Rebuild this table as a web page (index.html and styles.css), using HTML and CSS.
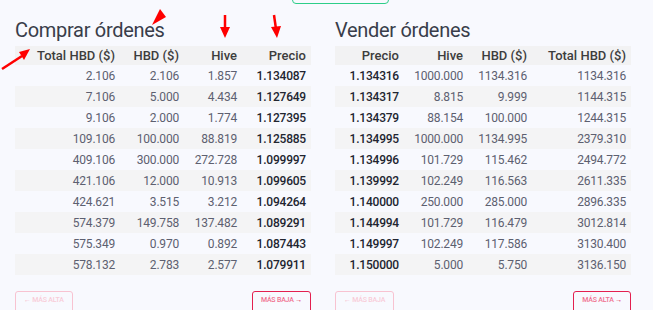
FILE: index.html
```html
<!DOCTYPE html>
<html lang="es">
<head>
<meta charset="utf-8">
<title>Órdenes</title>
<link rel="stylesheet" href="styles.css">
</head>
<body>
<div class="topbar"><div class="topbtn"></div></div>
<div class="panes">
  <section class="pane">
    <h2 class="title">Comprar órdenes</h2>
    <table class="book">
      <colgroup><col class="w105"><col class="w64"><col class="w58"><col class="w69"></colgroup>
      <thead><tr><th>Total HBD ($)</th><th>HBD ($)</th><th>Hive</th><th>Precio</th></tr></thead>
      <tbody>
        <tr><td>2.106</td><td>2.106</td><td>1.857</td><td class="price">1.134087</td></tr>
        <tr><td>7.106</td><td>5.000</td><td>4.434</td><td class="price">1.127649</td></tr>
        <tr><td>9.106</td><td>2.000</td><td>1.774</td><td class="price">1.127395</td></tr>
        <tr><td>109.106</td><td>100.000</td><td>88.819</td><td class="price">1.125885</td></tr>
        <tr><td>409.106</td><td>300.000</td><td>272.728</td><td class="price">1.099997</td></tr>
        <tr><td>421.106</td><td>12.000</td><td>10.913</td><td class="price">1.099605</td></tr>
        <tr><td>424.621</td><td>3.515</td><td>3.212</td><td class="price">1.094264</td></tr>
        <tr><td>574.379</td><td>149.758</td><td>137.482</td><td class="price">1.089291</td></tr>
        <tr><td>575.349</td><td>0.970</td><td>0.892</td><td class="price">1.087443</td></tr>
        <tr><td>578.132</td><td>2.783</td><td>2.577</td><td class="price">1.079911</td></tr>
      </tbody>
    </table>
    <div class="pager">
      <button class="pbtn disabled"><span class="arr">&larr;</span> MÁS ALTA</button>
      <button class="pbtn">MÁS BAJA <span class="arr">&rarr;</span></button>
    </div>
  </section>
  <section class="pane">
    <h2 class="title">Vender órdenes</h2>
    <table class="book">
      <colgroup><col class="w69"><col class="w64"><col class="w64"><col class="w99"></colgroup>
      <thead><tr><th>Precio</th><th>Hive</th><th>HBD ($)</th><th>Total HBD ($)</th></tr></thead>
      <tbody>
        <tr><td class="price">1.134316</td><td>1000.000</td><td>1134.316</td><td>1134.316</td></tr>
        <tr><td class="price">1.134317</td><td>8.815</td><td>9.999</td><td>1144.315</td></tr>
        <tr><td class="price">1.134379</td><td>88.154</td><td>100.000</td><td>1244.315</td></tr>
        <tr><td class="price">1.134995</td><td>1000.000</td><td>1134.995</td><td>2379.310</td></tr>
        <tr><td class="price">1.134996</td><td>101.729</td><td>115.462</td><td>2494.772</td></tr>
        <tr><td class="price">1.139992</td><td>102.249</td><td>116.563</td><td>2611.335</td></tr>
        <tr><td class="price">1.140000</td><td>250.000</td><td>285.000</td><td>2896.335</td></tr>
        <tr><td class="price">1.144994</td><td>101.729</td><td>116.479</td><td>3012.814</td></tr>
        <tr><td class="price">1.149997</td><td>102.249</td><td>117.586</td><td>3130.400</td></tr>
        <tr><td class="price">1.150000</td><td>5.000</td><td>5.750</td><td>3136.150</td></tr>
      </tbody>
    </table>
    <div class="pager">
      <button class="pbtn disabled"><span class="arr">&larr;</span> MÁS BAJA</button>
      <button class="pbtn">MÁS ALTA <span class="arr">&rarr;</span></button>
    </div>
  </section>
</div>
<svg class="annot" width="653" height="310" viewBox="0 0 653 310">
  <polygon points="160,9 166,17 152,25" fill="#ff0000"/>
  <line x1="225" y1="15" x2="225" y2="29" stroke="#ff0000" stroke-width="2.5"/>
  <polygon points="220,27 230,27 225,38" fill="#ff0000"/>
  <line x1="274" y1="15" x2="276" y2="29" stroke="#ff0000" stroke-width="2.5"/>
  <polygon points="271,27 281,26 277,38" fill="#ff0000"/>
  <line x1="2" y1="69" x2="22" y2="56" stroke="#ff0000" stroke-width="2.5"/>
  <polygon points="19,52 24,60 30,49" fill="#ff0000"/>
</svg>
</body>
</html>
```
FILE: styles.css
```css
html, body {
  margin: 0;
  padding: 0;
  background: #f8f9fe;
  overflow: hidden;
}
body {
  width: 653px;
  height: 310px;
  position: relative;
  font-family: Roboto, "Liberation Sans", sans-serif;
  color: #525f7f;
}
.topbar {
  height: 3px;
  padding-left: 292px;
}
.topbtn {
  width: 95px;
  height: 10px;
  margin-top: -8px;
  border: 1px solid #2dce89;
  border-radius: 4px;
}
.panes {
  display: grid;
  grid-template-columns: 296px 296px;
  column-gap: 24px;
  padding: 22px 15px 0 15px;
}
.title {
  margin: 0 0 3px 0;
  font-family: Roboto, "Noto Sans", sans-serif;
  font-weight: 400;
  font-size: 20px;
  line-height: 26px;
  color: #393d4a;
  letter-spacing: -0.3px;
}
.book {
  width: 296px;
  table-layout: fixed;
  border-collapse: collapse;
  font-size: 12px;
}
.w105 { width: 105px; }
.w64 { width: 64px; }
.w58 { width: 58px; }
.w69 { width: 69px; }
.w99 { width: 99px; }
.book th {
  height: 19px;
  padding: 0 5px;
  text-align: right;
  font-weight: 500;
  font-size: 13px;
  color: #3d3d3d;
  background: #f2f2f3;
  white-space: nowrap;
}
.book td {
  height: 21px;
  padding: 0 5px;
  text-align: right;
  color: #5d6070;
  white-space: nowrap;
  letter-spacing: -0.2px;
}
.book tbody tr:nth-child(even) td {
  background: #f4f4f5;
}
.book td.price {
  font-weight: 500;
  color: #222530;
}
.pager {
  display: flex;
  justify-content: space-between;
  margin-top: 16px;
}
.pbtn {
  height: 24px;
  padding: 0 8px 6px 8px;
  background: transparent;
  border: 1px solid #e3204f;
  border-radius: 3px;
  font-family: Roboto, "Liberation Sans", sans-serif;
  font-size: 7px;
  font-weight: 500;
  color: #f0708f;
  letter-spacing: -0.2px;
}
.pbtn .arr {
  color: #d8123f;
}
.pbtn.disabled {
  border-color: #f8c3d1;
  color: #f8ccd8;
}
.pbtn.disabled .arr {
  color: #f6b6c8;
}
.annot {
  position: absolute;
  left: 0;
  top: 0;
  pointer-events: none;
}
```
